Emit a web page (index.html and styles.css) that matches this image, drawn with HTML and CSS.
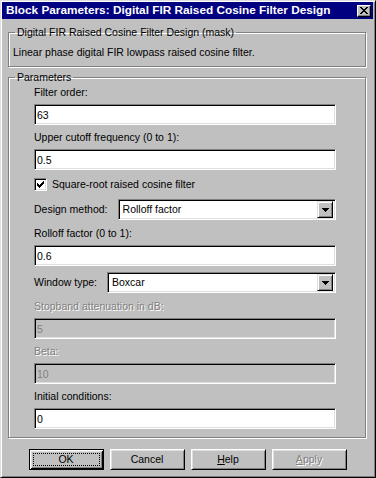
FILE: index.html
```html
<!DOCTYPE html>
<html lang="en">
<head>
    <meta charset="UTF-8">
    <title>Block Parameters: Digital FIR Raised Cosine Filter Design</title>
    <link rel="stylesheet" href="styles.css">
</head>
<body>
    <div class="window">
        <div class="titlebar">
            <span class="title">Block Parameters: Digital FIR Raised Cosine Filter Design</span>
            <button class="close-btn" aria-label="Close">
                <svg width="8" height="7" viewBox="0 0 8 7" shape-rendering="crispEdges">
                    <path d="M0 0h2v1h1v1h2v-1h1v-1h2v1h-1v1h-1v1h-1v1h1v1h1v1h1v1h-2v-1h-1v-1h-2v1h-1v1h-2v-1h1v-1h1v-1h1v-1h-1v-1h-1v-1h-1z" fill="#000"/>
                </svg>
            </button>
        </div>

        <div class="client">
            <fieldset class="group group-mask">
                <legend>Digital FIR Raised Cosine Filter Design (mask)</legend>
                <p class="description">Linear phase digital FIR lowpass raised cosine filter.</p>
            </fieldset>

            <fieldset class="group group-params">
                <legend>Parameters</legend>
                <div class="params">
                    <label class="field-label">Filter order:</label>
                    <input class="edit" type="text" value="63">

                    <label class="field-label">Upper cutoff frequency (0 to 1):</label>
                    <input class="edit" type="text" value="0.5">

                    <div class="check-row">
                        <span class="checkbox">
                            <svg width="7" height="7" viewBox="0 0 7 7" shape-rendering="crispEdges">
                                <path d="M6 0h1v3h-1v1h-1v1h-1v1h-1v1h-1v-1h-1v-1h-1v-3h1v1h1v1h1v-1h1v-1h1v-1h1z" fill="#000"/>
                            </svg>
                        </span>
                        <span>Square-root raised cosine filter</span>
                    </div>

                    <div class="combo-row">
                        <span class="combo-label">Design method:</span>
                        <div class="combo">
                            <span class="combo-value">Rolloff factor</span>
                            <span class="combo-arrow">
                                <svg width="7" height="4" viewBox="0 0 7 4" shape-rendering="crispEdges">
                                    <path d="M0 0h7v1h-1v1h-1v1h-1v1h-1v-1h-1v-1h-1v-1h-1z" fill="#000"/>
                                </svg>
                            </span>
                        </div>
                    </div>

                    <label class="field-label">Rolloff factor (0 to 1):</label>
                    <input class="edit" type="text" value="0.6">

                    <div class="combo-row">
                        <span class="combo-label">Window type:</span>
                        <div class="combo">
                            <span class="combo-value">Boxcar</span>
                            <span class="combo-arrow">
                                <svg width="7" height="4" viewBox="0 0 7 4" shape-rendering="crispEdges">
                                    <path d="M0 0h7v1h-1v1h-1v1h-1v1h-1v-1h-1v-1h-1v-1h-1z" fill="#000"/>
                                </svg>
                            </span>
                        </div>
                    </div>

                    <label class="field-label disabled">Stopband attenuation in dB:</label>
                    <input class="edit" type="text" value="5" disabled>

                    <label class="field-label disabled">Beta:</label>
                    <input class="edit" type="text" value="10" disabled>

                    <label class="field-label">Initial conditions:</label>
                    <input class="edit edit-last" type="text" value="0">
                </div>
            </fieldset>

            <div class="buttons">
                <button class="btn btn-default"><span class="focus">OK</span></button>
                <button class="btn"><span class="focus-none">Cancel</span></button>
                <button class="btn"><span class="focus-none"><u>H</u>elp</span></button>
                <button class="btn" disabled><span class="focus-none"><u>A</u>pply</span></button>
            </div>
        </div>
    </div>
</body>
</html>
```

FILE: styles.css
```css
:root {
    --face: #c0c0c0;
    --light: #dfdfdf;
    --shadow: #808080;
    --navy: #000080;
}

body {
    margin: 0;
    background: var(--face);
    font-family: 'Liberation Sans', Arial, sans-serif;
    font-size: 10.5px;
    line-height: 13px;
    color: #000;
}

.window {
    box-sizing: border-box;
    width: 376px;
    height: 478px;
    background: var(--face);
    border: 1px solid;
    border-color: var(--light) #000 #000 var(--light);
    box-shadow: inset 1px 1px #fff, inset -1px -1px var(--shadow);
    padding: 1px 2px 1px 1px;
    display: flex;
    flex-direction: column;
}

/* TITLE BAR */
.titlebar {
    height: 17px;
    background: var(--navy);
    color: #fff;
    display: flex;
    align-items: center;
    padding-left: 4px;
}

.title {
    font-weight: bold;
    font-size: 11.8px;
    white-space: nowrap;
}

.close-btn {
    margin-left: auto;
    margin-right: 2px;
    width: 14px;
    height: 12px;
    padding: 0;
    background: var(--face);
    border: 1px solid;
    border-color: #fff #000 #000 #fff;
    box-shadow: inset -1px -1px var(--shadow);
    display: flex;
    align-items: center;
    justify-content: center;
}

/* GROUP BOXES */
.client {
    flex: 1;
    display: flex;
    flex-direction: column;
}

.group {
    margin: 0 7px 0 6px;
    padding: 0 4px;
    min-inline-size: 0;
    border: 1px solid var(--shadow);
    box-shadow: inset 1px 1px #fff, 1px 1px #fff;
}

.group legend {
    margin-left: 2px;
    padding: 0 2px;
    line-height: 13px;
}

.group-mask {
    margin-top: 7px;
    padding-top: 7px;
    padding-bottom: 7px;
}

.description {
    margin: 0;
}

.group-params {
    margin-top: 4px;
    padding-top: 2px;
    padding-bottom: 8px;
}

.params {
    display: flex;
    flex-direction: column;
    padding: 0 25px 0 21px;
}

.field-label {
    display: block;
    margin-bottom: 5px;
}

.field-label.disabled {
    color: var(--shadow);
    text-shadow: 1px 1px 0 #fff;
}

.edit {
    box-sizing: border-box;
    height: 21px;
    width: 100%;
    margin: 0 0 6px;
    padding: 0 2px;
    font: inherit;
    color: #000;
    background: #fff;
    border: 1px solid;
    border-color: var(--shadow) #fff #fff var(--shadow);
    box-shadow: inset 1px 1px #000, inset -1px -1px var(--light);
    outline: none;
}

.edit:disabled {
    background: var(--face);
    color: var(--shadow);
    -webkit-text-fill-color: var(--shadow);
    opacity: 1;
}

.edit-last {
    margin-bottom: 0;
}

.check-row {
    display: flex;
    align-items: center;
    height: 13px;
    margin: 2px 0 8px;
}

.checkbox {
    box-sizing: border-box;
    width: 13px;
    height: 13px;
    margin-right: 5px;
    background: #fff;
    border: 1px solid;
    border-color: var(--shadow) #fff #fff var(--shadow);
    box-shadow: inset 1px 1px #000, inset -1px -1px var(--light);
    display: flex;
    align-items: center;
    justify-content: center;
}

.combo-row {
    display: flex;
    align-items: center;
    margin-bottom: 7px;
}

.combo-label {
    margin-right: 10px;
    white-space: nowrap;
}

.combo {
    flex: 1;
    box-sizing: border-box;
    height: 21px;
    background: #fff;
    border: 1px solid;
    border-color: var(--shadow) #fff #fff var(--shadow);
    box-shadow: inset 1px 1px #000, inset -1px -1px var(--light);
    padding: 2px 2px 2px 4px;
    display: flex;
    align-items: center;
}

.combo-value {
    flex: 1;
}

.combo-arrow {
    box-sizing: border-box;
    width: 16px;
    height: 17px;
    background: var(--face);
    border: 1px solid;
    border-color: var(--light) #000 #000 var(--light);
    box-shadow: inset 1px 1px #fff, inset -1px -1px var(--shadow);
    display: flex;
    align-items: center;
    justify-content: center;
}

/* BUTTONS */
.buttons {
    display: flex;
    justify-content: center;
    gap: 6px;
    margin-top: 11px;
}

.btn {
    box-sizing: border-box;
    width: 75px;
    height: 21px;
    padding: 3px;
    font: inherit;
    color: #000;
    background: var(--face);
    border: 1px solid;
    border-color: #fff #000 #000 #fff;
    box-shadow: inset 1px 1px var(--light), inset -1px -1px var(--shadow);
    display: flex;
}

.btn-default {
    border-color: #000;
    box-shadow: inset 1px 1px #fff, inset -1px -1px #000, inset 2px 2px var(--light), inset -2px -2px var(--shadow);
}

.btn span {
    flex: 1;
    display: flex;
    align-items: center;
    justify-content: center;
    border: 1px solid transparent;
}

.btn .focus {
    border: 1px dotted #000;
}

.btn:disabled {
    color: var(--shadow);
    text-shadow: 1px 1px 0 #fff;
}
```
